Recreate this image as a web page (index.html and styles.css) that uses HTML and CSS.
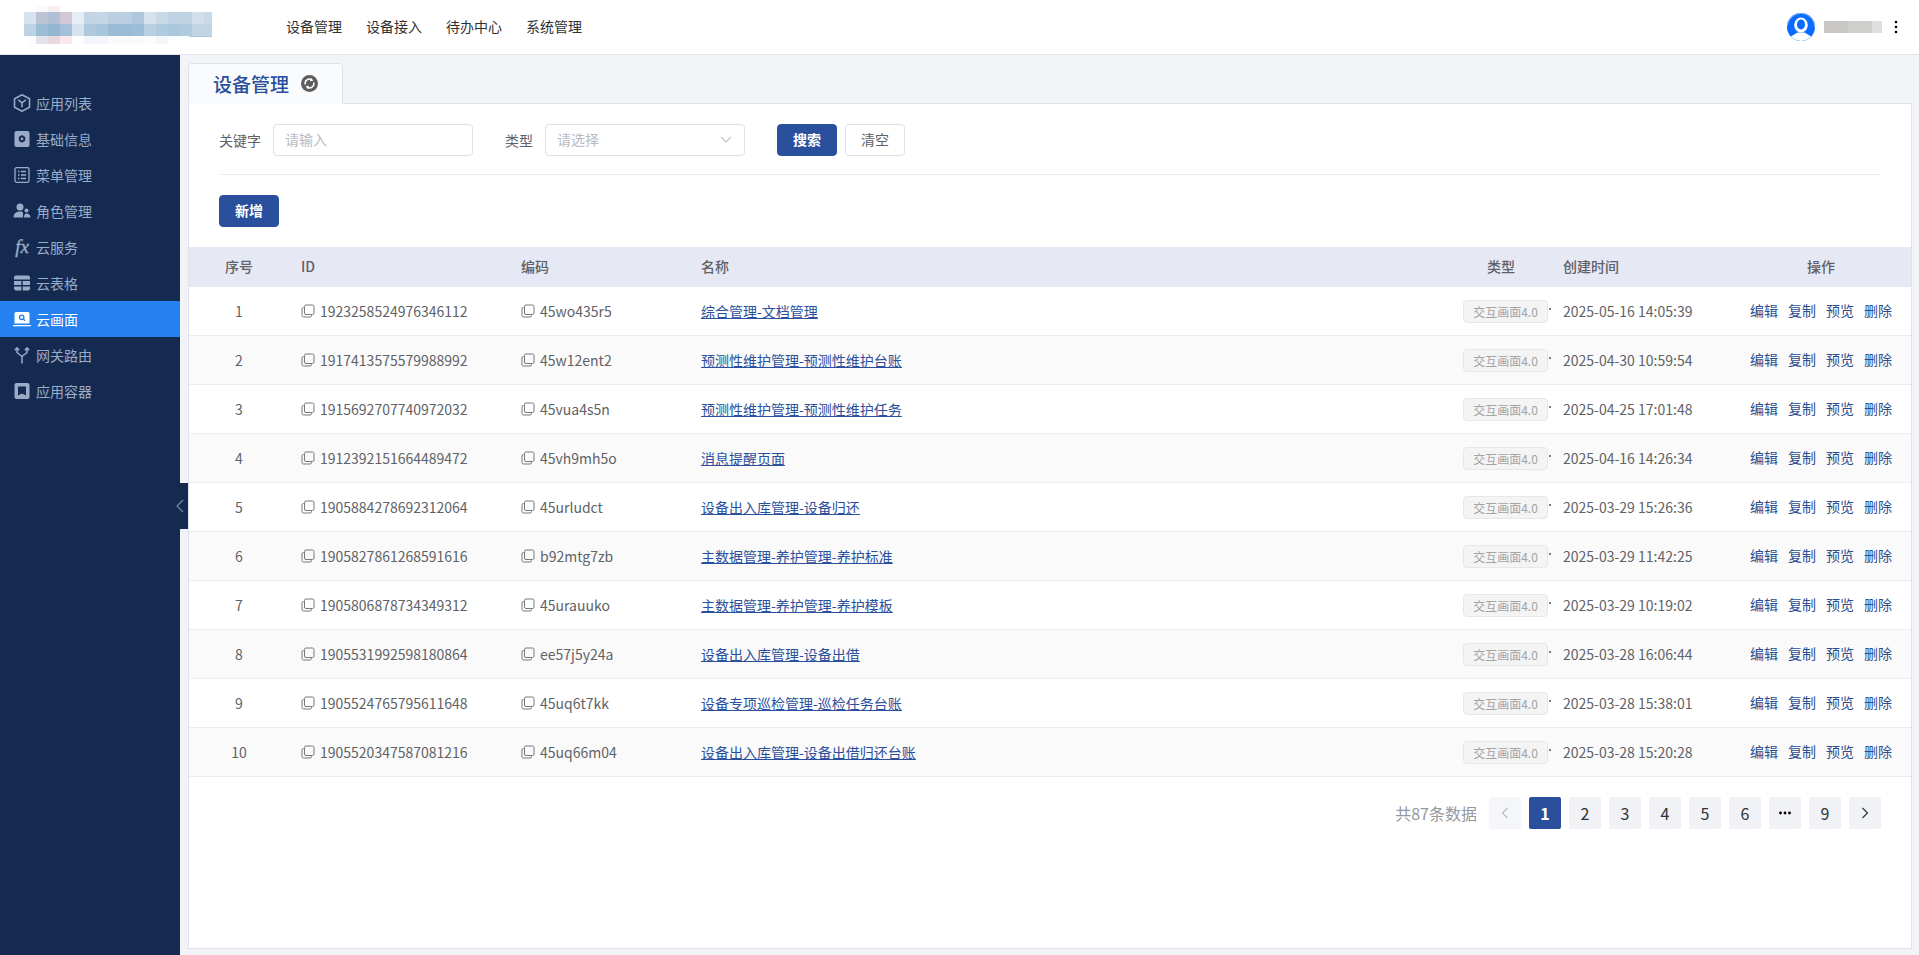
FILE: index.html
```html
<!DOCTYPE html>
<html lang="zh-CN">
<head>
	<meta charset="UTF-8">
	<title>设备管理</title>
	<link rel="stylesheet" href="styles.css">
</head>
<body>
<svg class="defs" width="0" height="0">
	<symbol id="copy" viewBox="0 0 14 14">
		<rect x="3.5" y="1" width="9.5" height="9.5" rx="1.5" fill="none" stroke="currentColor"/>
		<path d="M3.5 3.5H2.5A1.5 1.5 0 0 0 1 5V11.5A1.5 1.5 0 0 0 2.5 13H9A1.5 1.5 0 0 0 10.5 11.5V10.5" fill="none" stroke="currentColor"/>
	</symbol>
</svg>

<header class="topbar">
	<svg class="logo" width="188" height="38" viewBox="0 0 188 38">
		<g>
			<rect x="12" y="0" width="12" height="6" fill="#fafafc"/><rect x="24" y="0" width="12" height="6" fill="#f9eff1"/>
		</g>
		<g>
			<rect x="0" y="6" width="12" height="12" fill="#d6e3ee"/><rect x="12" y="6" width="12" height="12" fill="#bcc3d6"/><rect x="24" y="6" width="12" height="12" fill="#b2c0d6"/><rect x="36" y="6" width="12" height="12" fill="#d2c8d6"/><rect x="48" y="6" width="12" height="12" fill="#e6edf4"/><rect x="60" y="6" width="12" height="12" fill="#c3d5e5"/><rect x="72" y="6" width="12" height="12" fill="#c5d6e6"/><rect x="84" y="6" width="12" height="12" fill="#bacfe1"/><rect x="96" y="6" width="12" height="12" fill="#bccfe1"/><rect x="108" y="6" width="12" height="12" fill="#afc7dd"/><rect x="120" y="6" width="12" height="12" fill="#d6e3ec"/><rect x="132" y="6" width="12" height="12" fill="#c8dae6"/><rect x="144" y="6" width="12" height="12" fill="#bdd2e3"/><rect x="156" y="6" width="12" height="12" fill="#bfd3e3"/><rect x="168" y="6" width="12" height="12" fill="#d2deea"/><rect x="180" y="6" width="8" height="12" fill="#c8dae8"/>
		</g>
		<g>
			<rect x="0" y="18" width="12" height="12" fill="#bdd2e4"/><rect x="12" y="18" width="12" height="12" fill="#9dbdd6"/><rect x="24" y="18" width="12" height="12" fill="#93b7d3"/><rect x="36" y="18" width="12" height="12" fill="#a5c0da"/><rect x="48" y="18" width="12" height="12" fill="#d6e3ee"/><rect x="60" y="18" width="12" height="12" fill="#afc8de"/><rect x="72" y="18" width="12" height="12" fill="#a8c6db"/><rect x="84" y="18" width="12" height="12" fill="#9abcd6"/><rect x="96" y="18" width="12" height="12" fill="#98bbd6"/><rect x="108" y="18" width="12" height="12" fill="#9dbdd8"/><rect x="120" y="18" width="12" height="12" fill="#bad0e2"/><rect x="132" y="18" width="12" height="12" fill="#b0cbdf"/><rect x="144" y="18" width="12" height="12" fill="#aac8dd"/><rect x="156" y="18" width="12" height="12" fill="#b0cadf"/><rect x="168" y="18" width="12" height="12" fill="#c2d5e4"/><rect x="180" y="18" width="8" height="12" fill="#c0d4e4"/>
		</g>
		<g>
			<rect x="4" y="30" width="8" height="8" fill="#fafcfd"/><rect x="12" y="30" width="12" height="8" fill="#e3e3ea"/><rect x="24" y="30" width="12" height="8" fill="#e8d8e0"/><rect x="36" y="30" width="12" height="8" fill="#fce8ea"/><rect x="48" y="30" width="12" height="8" fill="#fdfefe"/><rect x="60" y="30" width="24" height="8" fill="#f2f6fa"/><rect x="84" y="30" width="36" height="8" fill="#f8fafc"/><rect x="120" y="30" width="12" height="8" fill="#fafbfd"/><rect x="132" y="30" width="12" height="8" fill="#f4f7fa"/><rect x="144" y="30" width="24" height="4" fill="#fbfcfd"/>
			<rect x="165" y="30" width="23" height="1" fill="#a9c6e2"/>
		</g>
	</svg>
	<nav class="topnav">
		<a>设备管理</a>
		<a>设备接入</a>
		<a>待办中心</a>
		<a>系统管理</a>
	</nav>
	<div class="user">
		<svg class="avatar" width="28" height="28" viewBox="0 0 28 28">
			<circle cx="14" cy="14" r="14" fill="#0a6cff"/>
			<ellipse cx="14" cy="12" rx="6.8" ry="7.6" fill="#fff"/>
			<ellipse cx="14" cy="11.5" rx="4" ry="5" fill="#0a6cff"/>
			<path d="M3.8 23.5 10.5 19.5H17.5L24.2 23.5A14 14 0 0 1 3.8 23.5Z" fill="#fff"/>
			<circle cx="14" cy="14" r="13.6" fill="none" stroke="#a9c8f5" stroke-width=".6" stroke-dasharray="0 44 44"/>
		</svg>
		<div class="username"><i></i><i></i><i></i></div>
		<svg class="more" width="4" height="14" viewBox="0 0 4 14">
			<circle cx="2" cy="2" r="1.3"/><circle cx="2" cy="7" r="1.3"/><circle cx="2" cy="12" r="1.3"/>
		</svg>
	</div>
</header>

<div class="layout">
	<aside class="sidebar">
		<ul class="menu">
			<li>
				<svg viewBox="0 0 18 18"><path d="M9 .8 16.500 4.800V13.200L9 17.200 1.500 13.200V4.800Z" fill="none" stroke="currentColor" stroke-width="1.600"/><path d="M5.200 5.800 9 8.800 12.800 5.800M9 8.800V13.200" fill="none" stroke="currentColor" stroke-width="1.600"/></svg>
				<span>应用列表</span>
			</li>
			<li>
				<svg viewBox="0 0 18 18"><rect x="1.500" y="1" width="15" height="16" rx="2" fill="currentColor"/><path d="M9 5 12.200 6.900V10.800L9 12.700 5.800 10.800V6.900Z" fill="#152a50"/><circle cx="9" cy="8.900" r="1.300" fill="currentColor"/></svg>
				<span>基础信息</span>
			</li>
			<li>
				<svg viewBox="0 0 18 18"><rect x="2" y="1.700" width="14" height="14.600" rx="1.500" fill="none" stroke="currentColor" stroke-width="1.300"/><path d="M5 5.500H6.500M8 5.500H13M5 9H6.500M8 9H13M5 12.500H6.500M8 12.500H13" stroke="currentColor" stroke-width="1.300"/></svg>
				<span>菜单管理</span>
			</li>
			<li>
				<svg viewBox="0 0 18 18"><circle cx="7" cy="5" r="3.500" fill="currentColor"/><path d="M.5 15.500C.5 11.500 3.500 9.500 7 9.500C8.500 9.500 9.500 10 10 10.500V15.500Z" fill="currentColor"/><circle cx="13.500" cy="8.500" r="2" fill="currentColor"/><path d="M11 15.500C11 13 12 11.500 13.500 11.500C15.500 11.500 17.500 13 17.500 15.500Z" fill="currentColor"/></svg>
				<span>角色管理</span>
			</li>
			<li>
				<span class="fx">fx</span>
				<span>云服务</span>
			</li>
			<li>
				<svg viewBox="0 0 18 18"><path d="M1 3.500A2 2 0 0 1 3 1.500H15A2 2 0 0 1 17 3.500V5.500H1ZM1 7H8.300V11H1ZM9.700 7H17V11H9.700ZM1 12.400H8.300V16.500H3A2 2 0 0 1 1 14.500ZM9.700 12.400H17V14.500A2 2 0 0 1 15 16.500H9.700Z" fill="currentColor"/></svg>
				<span>云表格</span>
			</li>
			<li class="active">
				<svg viewBox="0 0 18 18"><path d="M1.500 3.500A1.500 1.500 0 0 1 3 2H15A1.500 1.500 0 0 1 16.500 3.500V13.500H1.500Z" fill="currentColor"/><rect x="0" y="15" width="18" height="1.300" fill="currentColor"/><circle cx="8.700" cy="7.300" r="2.200" fill="none" stroke="#2681f0" stroke-width="1.300"/><path d="M10.300 9 12 10.700" stroke="#2681f0" stroke-width="1.300"/></svg>
				<span>云画面</span>
			</li>
			<li>
				<svg viewBox="0 0 18 18"><path d="M9 17.500V10.500M9 10.500 4 6.500V2M9 10.500 14 6.500V2M1.800 4.200 4 1.800 6.200 4.200M11.800 4.200 14 1.800 16.200 4.200" fill="none" stroke="currentColor" stroke-width="1.500"/></svg>
				<span>网关路由</span>
			</li>
			<li>
				<svg viewBox="0 0 18 18"><path d="M3.500 1H14.500A2 2 0 0 1 16.500 3V15A2 2 0 0 1 14.500 17H3.500A2 2 0 0 1 1.500 15V3A2 2 0 0 1 3.500 1ZM5 4.500V13.500L9 11.500 13 13.500V4.500Z" fill="currentColor" fill-rule="evenodd"/></svg>
				<span>应用容器</span>
			</li>
		</ul>
		<div class="collapse">
			<svg width="8" height="14" viewBox="0 0 8 14"><path d="M7 1 1 7 7 13" fill="none" stroke="#7d91b3" stroke-width="1.100"/></svg>
		</div>
	</aside>

	<main class="main">
		<div class="tabs">
			<div class="tab">
				<span class="tab-title">设备管理</span>
				<svg width="17" height="17" viewBox="0 0 17 17">
					<circle cx="8.500" cy="8.500" r="8.500" fill="#5e5e5e"/>
					<path d="M4.300 9.500A4.300 4.300 0 0 1 10.800 4.800M12.700 7.500A4.300 4.300 0 0 1 6.200 12.200" fill="none" stroke="#fff" stroke-width="1.500"/>
					<path d="M10 2.800 12.400 5.800 8.800 6.200ZM7 14.200 4.600 11.200 8.200 10.800Z" fill="#fff"/>
				</svg>
			</div>
		</div>

		<section class="panel">
			<form class="filter">
				<label class="filter-label">关键字</label>
				<div class="field">请输入</div>
				<label class="filter-label type-label">类型</label>
				<div class="field select">
					请选择
					<svg width="12" height="7" viewBox="0 0 12 7"><path d="M1 1 6 6 11 1" fill="none" stroke="#c0c4cc" stroke-width="1.100"/></svg>
				</div>
				<button type="button" class="btn primary search">搜索</button>
				<button type="button" class="btn">清空</button>
			</form>

			<div class="toolbar">
				<button type="button" class="btn primary">新增</button>
			</div>

			<table class="grid">
				<colgroup>
					<col class="c-no"><col class="c-id"><col class="c-code"><col><col class="c-type"><col class="c-time"><col class="c-ops">
				</colgroup>
				<thead>
					<tr>
						<th class="center">序号</th>
						<th>ID</th>
						<th>编码</th>
						<th>名称</th>
						<th class="center">类型</th>
						<th>创建时间</th>
						<th class="center">操作</th>
					</tr>
				</thead>
				<tbody>
					<tr>
						<td class="center">1</td>
						<td><span class="copy"><svg><use href="#copy"/></svg>1923258524976346112</span></td>
						<td><span class="copy"><svg><use href="#copy"/></svg>45wo435r5</span></td>
						<td><a class="name">综合管理-文档管理</a></td>
						<td><span class="tag">交互画面4.0</span><i class="dot"></i></td>
						<td>2025-05-16 14:05:39</td>
						<td class="ops"><a>编辑</a><a>复制</a><a>预览</a><a>删除</a></td>
					</tr>
					<tr>
						<td class="center">2</td>
						<td><span class="copy"><svg><use href="#copy"/></svg>1917413575579988992</span></td>
						<td><span class="copy"><svg><use href="#copy"/></svg>45w12ent2</span></td>
						<td><a class="name">预测性维护管理-预测性维护台账</a></td>
						<td><span class="tag">交互画面4.0</span><i class="dot"></i></td>
						<td>2025-04-30 10:59:54</td>
						<td class="ops"><a>编辑</a><a>复制</a><a>预览</a><a>删除</a></td>
					</tr>
					<tr>
						<td class="center">3</td>
						<td><span class="copy"><svg><use href="#copy"/></svg>1915692707740972032</span></td>
						<td><span class="copy"><svg><use href="#copy"/></svg>45vua4s5n</span></td>
						<td><a class="name">预测性维护管理-预测性维护任务</a></td>
						<td><span class="tag">交互画面4.0</span><i class="dot"></i></td>
						<td>2025-04-25 17:01:48</td>
						<td class="ops"><a>编辑</a><a>复制</a><a>预览</a><a>删除</a></td>
					</tr>
					<tr>
						<td class="center">4</td>
						<td><span class="copy"><svg><use href="#copy"/></svg>1912392151664489472</span></td>
						<td><span class="copy"><svg><use href="#copy"/></svg>45vh9mh5o</span></td>
						<td><a class="name">消息提醒页面</a></td>
						<td><span class="tag">交互画面4.0</span><i class="dot"></i></td>
						<td>2025-04-16 14:26:34</td>
						<td class="ops"><a>编辑</a><a>复制</a><a>预览</a><a>删除</a></td>
					</tr>
					<tr>
						<td class="center">5</td>
						<td><span class="copy"><svg><use href="#copy"/></svg>1905884278692312064</span></td>
						<td><span class="copy"><svg><use href="#copy"/></svg>45urludct</span></td>
						<td><a class="name">设备出入库管理-设备归还</a></td>
						<td><span class="tag">交互画面4.0</span><i class="dot"></i></td>
						<td>2025-03-29 15:26:36</td>
						<td class="ops"><a>编辑</a><a>复制</a><a>预览</a><a>删除</a></td>
					</tr>
					<tr>
						<td class="center">6</td>
						<td><span class="copy"><svg><use href="#copy"/></svg>1905827861268591616</span></td>
						<td><span class="copy"><svg><use href="#copy"/></svg>b92mtg7zb</span></td>
						<td><a class="name">主数据管理-养护管理-养护标准</a></td>
						<td><span class="tag">交互画面4.0</span><i class="dot"></i></td>
						<td>2025-03-29 11:42:25</td>
						<td class="ops"><a>编辑</a><a>复制</a><a>预览</a><a>删除</a></td>
					</tr>
					<tr>
						<td class="center">7</td>
						<td><span class="copy"><svg><use href="#copy"/></svg>1905806878734349312</span></td>
						<td><span class="copy"><svg><use href="#copy"/></svg>45urauuko</span></td>
						<td><a class="name">主数据管理-养护管理-养护模板</a></td>
						<td><span class="tag">交互画面4.0</span><i class="dot"></i></td>
						<td>2025-03-29 10:19:02</td>
						<td class="ops"><a>编辑</a><a>复制</a><a>预览</a><a>删除</a></td>
					</tr>
					<tr>
						<td class="center">8</td>
						<td><span class="copy"><svg><use href="#copy"/></svg>1905531992598180864</span></td>
						<td><span class="copy"><svg><use href="#copy"/></svg>ee57j5y24a</span></td>
						<td><a class="name">设备出入库管理-设备出借</a></td>
						<td><span class="tag">交互画面4.0</span><i class="dot"></i></td>
						<td>2025-03-28 16:06:44</td>
						<td class="ops"><a>编辑</a><a>复制</a><a>预览</a><a>删除</a></td>
					</tr>
					<tr>
						<td class="center">9</td>
						<td><span class="copy"><svg><use href="#copy"/></svg>1905524765795611648</span></td>
						<td><span class="copy"><svg><use href="#copy"/></svg>45uq6t7kk</span></td>
						<td><a class="name">设备专项巡检管理-巡检任务台账</a></td>
						<td><span class="tag">交互画面4.0</span><i class="dot"></i></td>
						<td>2025-03-28 15:38:01</td>
						<td class="ops"><a>编辑</a><a>复制</a><a>预览</a><a>删除</a></td>
					</tr>
					<tr>
						<td class="center">10</td>
						<td><span class="copy"><svg><use href="#copy"/></svg>1905520347587081216</span></td>
						<td><span class="copy"><svg><use href="#copy"/></svg>45uq66m04</span></td>
						<td><a class="name">设备出入库管理-设备出借归还台账</a></td>
						<td><span class="tag">交互画面4.0</span><i class="dot"></i></td>
						<td>2025-03-28 15:20:28</td>
						<td class="ops"><a>编辑</a><a>复制</a><a>预览</a><a>删除</a></td>
					</tr>
				</tbody>
			</table>

			<div class="pager">
				<span class="total">共87条数据</span>
				<a class="page disabled"><svg width="8" height="12" viewBox="0 0 8 12"><path d="M6.500 1 1.500 6 6.500 11" fill="none" stroke="#b4b8c2" stroke-width="1.100"/></svg></a>
				<a class="page on">1</a>
				<a class="page">2</a>
				<a class="page">3</a>
				<a class="page">4</a>
				<a class="page">5</a>
				<a class="page">6</a>
				<a class="page"><svg width="14" height="4" viewBox="0 0 14 4"><circle cx="2.500" cy="2" r="1.400"/><circle cx="7" cy="2" r="1.400"/><circle cx="11.500" cy="2" r="1.400"/></svg></a>
				<a class="page">9</a>
				<a class="page"><svg width="8" height="12" viewBox="0 0 8 12"><path d="M1.500 1 6.500 6 1.500 11" fill="none" stroke="#303133" stroke-width="1.100"/></svg></a>
			</div>
		</section>
	</main>
</div>
</body>
</html>
```

FILE: styles.css
```css
*{
	box-sizing: border-box;
}
html,body{
	height: 100%;
}
body{
	margin: 0;
	background-color: #f2f3f7;
	color: #606266;
	font-family: "Noto Sans CJK SC", "Noto Sans", sans-serif;
	font-size: 14px;
	overflow: hidden;
}
.defs{
	position: absolute;
}

/* 顶部 */
.topbar{
	display: flex;
	align-items: center;
	height: 55px;
	padding-left: 24px;
	background-color: #fff;
	border-bottom: 1px solid #e4e6eb;
}
.logo{
	align-self: flex-start;
	margin-top: 6px;
	flex: none;
}
.topnav{
	display: flex;
	gap: 24px;
	margin-left: 74px;
	padding-bottom: 2px;
}
.topnav a{
	color: #303133;
}
.user{
	display: flex;
	align-items: center;
	margin-left: auto;
	padding-right: 21px;
}
.username{
	display: flex;
	margin-left: 9px;
}
.username i{
	width: 24px;
	height: 12px;
	background-color: #c8c7c3;
}
.username i:nth-child(2){
	background-color: #cfcfcd;
}
.username i:nth-child(3){
	width: 10px;
	background-color: #dfdfdf;
}
.more{
	margin-left: 12px;
}

.layout{
	display: flex;
	height: 900px;
}

/* 左侧菜单 */
.sidebar{
	position: relative;
	flex: none;
	width: 180px;
	padding-top: 30px;
	background-color: #152a50;
}
.menu{
	margin: 0;
	padding: 0;
	list-style: none;
}
.menu li{
	display: flex;
	align-items: center;
	gap: 5px;
	height: 36px;
	padding-left: 13px;
	color: #9aabc8;
}
.menu li svg, .fx{
	flex: none;
	width: 18px;
	height: 18px;
}
.fx{
	font-family: "Liberation Serif", serif;
	font-style: italic;
	font-size: 19px;
	line-height: 17px;
	text-align: center;
	-webkit-text-stroke: .4px currentColor;
}
.menu .active{
	background-color: #2681f0;
	color: #fff;
}
.collapse{
	position: absolute;
	top: 428px;
	right: -8px;
	display: flex;
	align-items: center;
	justify-content: center;
	width: 14px;
	height: 46px;
	padding-right: 3px;
	background-color: #152a50;
}

/* 内容区 */
.main{
	flex: 1;
	min-width: 0;
	padding: 8px 7px 6px 8px;
	display: flex;
	flex-direction: column;
}
.tabs{
	display: flex;
	margin-bottom: -1px;
}
.tab{
	display: flex;
	align-items: center;
	gap: 12px;
	width: 155px;
	height: 41px;
	padding-left: 24px;
	background-color: #fafbfd;
	border: 1px solid #dfe2e9;
	border-bottom-color: #fafbfd;
	border-radius: 4px 4px 0 0;
	position: relative;
	z-index: 1;
}
.tab-title{
	color: #2a4f9c;
	font-size: 19px;
	font-weight: 500;
}
.panel{
	flex: 1;
	background-color: #fff;
	border: 1px solid #dfe2e9;
}

.filter{
	display: flex;
	align-items: center;
	margin: 20px 30px 0;
	padding-bottom: 18px;
	border-bottom: 1px solid #ebedf1;
}
.filter-label{
	margin-right: 12px;
}
.type-label{
	margin-left: 32px;
}
.field{
	display: flex;
	align-items: center;
	justify-content: space-between;
	width: 200px;
	height: 32px;
	padding: 0 12px 2px 11px;
	color: #b8bbc2;
	border: 1px solid #dfe1e8;
	border-radius: 4px;
}
.btn{
	width: 60px;
	height: 32px;
	padding: 0 0 2px;
	margin-right: 8px;
	background-color: #fff;
	color: #606266;
	border: 1px solid #dfe1e8;
	border-radius: 4px;
	font-family: inherit;
	font-size: 14px;
}
.btn.primary{
	background-color: #2a4f9c;
	border-color: #2a4f9c;
	color: #fff;
	font-weight: bold;
}
.search{
	margin-left: 32px;
}
.toolbar{
	display: flex;
	padding: 20px 30px;
}

/* 表格 */
.grid{
	width: 100%;
	table-layout: fixed;
	border-collapse: separate;
	border-spacing: 0;
}
.c-no{
	width: 100px;
}
.c-id{
	width: 220px;
}
.c-code{
	width: 180px;
}
.c-type{
	width: 100px;
}
.c-time{
	width: 180px;
}
.c-ops{
	width: 180px;
}
.grid th{
	height: 40px;
	padding: 0 12px 2px;
	background-color: #e6e9f4;
	color: #5f6068;
	font-weight: 500;
	text-align: left;
}
.grid td{
	height: 49px;
	padding: 0 12px;
	border-bottom: 1px solid #e9ecf4;
	white-space: nowrap;
}
.grid tbody tr:nth-child(even){
	background-color: #fafafa;
}
.grid .center{
	text-align: center;
}
.copy{
	display: inline-flex;
	align-items: center;
	gap: 5px;
}
.copy svg{
	width: 14px;
	height: 14px;
	color: #77797f;
}
.name{
	color: #2a4f9c;
	text-decoration: underline;
}
.tag{
	display: inline-block;
	width: 85px;
	height: 23px;
	background-color: #f4f4f5;
	color: #a3a3a6;
	border: 1px solid #e7e7ea;
	border-radius: 4px;
	font-size: 12px;
	line-height: 21px;
	text-align: center;
	vertical-align: middle;
}
.dot{
	display: inline-block;
	width: 2px;
	height: 2px;
	margin-left: 1px;
	background-color: #7d7d82;
	vertical-align: 5px;
}
.ops{
	text-align: center;
}
.ops a{
	display: inline-block;
	margin-right: 10px;
	color: #2c4d8f;
	vertical-align: 2px;
}
.ops a:last-child{
	margin-right: 0;
}

/* 分页 */
.pager{
	display: flex;
	align-items: center;
	justify-content: flex-end;
	gap: 8px;
	padding: 20px 30px 0 0;
}
.total{
	margin-right: 4px;
	color: #96989e;
	font-size: 16px;
}
.page{
	display: flex;
	align-items: center;
	justify-content: center;
	width: 32px;
	height: 32px;
	background-color: #f0f2f6;
	color: #303133;
	border-radius: 2px;
	font-size: 16px;
}
.page.disabled{
	background-color: #f5f6fa;
}
.page.on{
	background-color: #2a4f9c;
	color: #fff;
	font-weight: bold;
}
```
